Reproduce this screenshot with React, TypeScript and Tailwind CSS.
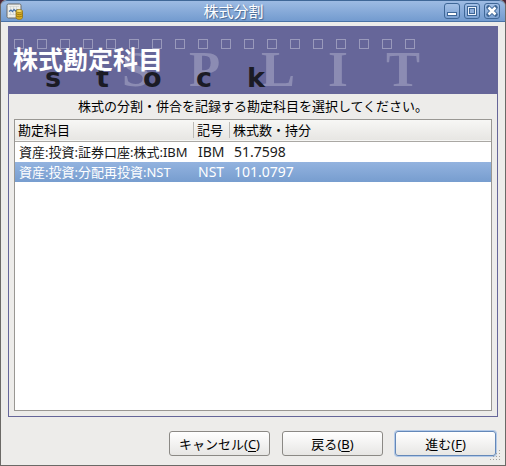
import { useState } from "react";
import type { ReactNode } from "react";

type Account = {
  name: string;
  symbol: string;
  shares: string;
};

const ACCOUNTS: Account[] = [
  { name: "資産:投資:証券口座:株式:IBM", symbol: "IBM", shares: "51.7598" },
  { name: "資産:投資:分配再投資:NST", symbol: "NST", shares: "101.0797" },
];

const SPLIT_LETTERS = [
  { char: "S", x: 113 },
  { char: "P", x: 180 },
  { char: "L", x: 252 },
  { char: "I", x: 319 },
  { char: "T", x: 377 },
];

const STOCK_LETTERS = [
  { char: "s", x: 36 },
  { char: "t", x: 87 },
  { char: "o", x: 134 },
  { char: "c", x: 187 },
  { char: "k", x: 238 },
];

function AppIcon() {
  return (
    <svg width="17" height="17" viewBox="0 0 17 17" aria-hidden="true">
      <rect x="1" y="1" width="14" height="14" rx="1.5" fill="#eeeeea" stroke="#6a6b69" />
      <path d="M3 3.5h10M3 11.5h7M4.5 3v9M7.5 3v9M10.5 3v6" stroke="#d0d2ce" strokeWidth="0.7" />
      <path d="M3 8.5l2-1.5 1.5 1.5L8 6.5 9.5 8l2-1.5" fill="none" stroke="#4770a8" strokeWidth="1.2" />
      <path d="M10 8v6.5c0 2.5 6.5 2.5 6.5 0V8z" fill="#d9ae22" stroke="#8d6b0c" strokeWidth="0.7" />
      <path d="M10 10.5c1 1.5 5.5 1.5 6.5 0M10 12.7c1 1.5 5.5 1.5 6.5 0" fill="none" stroke="#8d6b0c" strokeWidth="0.8" />
      <ellipse cx="13.2" cy="8" rx="3.2" ry="1.5" fill="#f7dd6a" stroke="#8d6b0c" strokeWidth="0.7" />
    </svg>
  );
}

function WindowButton({ label, children }: { label: string; children: ReactNode }) {
  return (
    <button
      type="button"
      aria-label={label}
      className="flex size-4 items-center justify-center rounded-[3px] border border-[#3f6797] bg-linear-to-b from-[#a3c0e6] to-[#7da2d3]"
    >
      <svg width="14" height="14" viewBox="0 0 14 14" className="shrink-0" aria-hidden="true">
        {children}
      </svg>
    </button>
  );
}

function TitleBar() {
  return (
    <header className="flex h-[22px] items-center rounded-t-md border-t border-b border-t-[#3f6797] border-b-[#4a72a6] bg-linear-to-b from-[#9dbbe3] to-[#739bcf] px-[5px]">
      <AppIcon />
      <h1 className="flex-1 text-center text-[15px] leading-5 text-white [text-shadow:1px_1px_1px_#44658f]">
        株式分割
      </h1>
      <div className="flex gap-1">
        <WindowButton label="最小化">
          <rect x="2.5" y="8.5" width="9" height="3" fill="#fff" stroke="#3f6797" />
        </WindowButton>
        <WindowButton label="最大化">
          <rect x="2.5" y="2.5" width="9" height="9" fill="#eef4fc" stroke="#3f6797" />
          <rect x="4.5" y="4.5" width="5" height="5" fill="#8eaedb" stroke="#3f6797" />
        </WindowButton>
        <WindowButton label="閉じる">
          <path d="M3.5 3.5l7 7M10.5 3.5l-7 7" stroke="#3f6797" strokeWidth="4.5" strokeLinecap="round" />
          <path d="M3.5 3.5l7 7M10.5 3.5l-7 7" stroke="#fff" strokeWidth="2.5" />
        </WindowButton>
      </div>
    </header>
  );
}

function Banner() {
  return (
    <div className="relative h-[67px] bg-[#666699]">
      <svg width="420" height="67" viewBox="0 0 420 67" className="block overflow-visible" aria-hidden="true">
        {Array.from({ length: 18 }, (_, i) => (
          <rect key={i} x={5.5 + i * 23} y="12.5" width="9" height="9" fill="none" stroke="#9999bb" />
        ))}
        <g fill="#8c8cb3" fontFamily="Liberation Serif, serif" fontSize="51" fontWeight="bold">
          {SPLIT_LETTERS.map(({ char, x }) => (
            <text key={char} x={x} y="59">{char}</text>
          ))}
        </g>
        <g fill="#1b1b25" fontFamily="DejaVu Sans, sans-serif" fontSize="27" fontWeight="bold">
          {STOCK_LETTERS.map(({ char, x }) => (
            <text key={char} x={x} y="60">{char}</text>
          ))}
        </g>
      </svg>
      <h2 className="absolute top-4 left-1 text-[25px] leading-8 font-bold text-white">株式勘定科目</h2>
    </div>
  );
}

function AccountTable() {
  const [selected, setSelected] = useState("NST");

  return (
    <div className="mx-[5px] mb-[5px] flex-1 border border-[#999793] bg-white">
      <table className="w-full table-fixed border-collapse text-left">
        <colgroup>
          <col className="w-[178px]" />
          <col className="w-9" />
          <col />
        </colgroup>
        <thead>
          <tr className="h-[21px] border-b border-[#aaa8a4] bg-linear-to-b from-[#f7f7f5] to-[#e7e6e3]">
            <th scope="col" className="p-0 pl-[3px] font-normal">勘定科目</th>
            <th scope="col" className="p-0 font-normal">
              <div className="h-4 border-l border-[#bcbab6] pl-[3px] leading-4">記号</div>
            </th>
            <th scope="col" className="p-0 font-normal">
              <div className="h-4 border-l border-[#bcbab6] pl-[3px] leading-4">株式数・持分</div>
            </th>
          </tr>
        </thead>
        <tbody>
          {ACCOUNTS.map((account) => (
            <tr
              key={account.symbol}
              aria-selected={account.symbol === selected}
              onClick={() => setSelected(account.symbol)}
              className={
                account.symbol === selected
                  ? "h-5 cursor-default bg-linear-to-b from-[#93b3df] to-[#779dcf] text-white"
                  : "h-5 cursor-default text-[#1a1a1a]"
              }
            >
              <td className="p-0 pl-1 whitespace-nowrap">{account.name}</td>
              <td className="p-0 pl-[5px] text-sm leading-5">{account.symbol}</td>
              <td className="p-0 pl-[5px] text-sm leading-5">{account.shares}</td>
            </tr>
          ))}
        </tbody>
      </table>
    </div>
  );
}

function DialogButton({ label, accel, focused = false }: { label: string; accel: string; focused?: boolean }) {
  return (
    <button
      type="button"
      className={
        focused
          ? "h-[25px] w-[101px] rounded-[3px] border border-[#6488b8] bg-linear-to-b from-white to-[#e7e6e4] leading-5 shadow-[0_0_0_1px_#b4cae8]"
          : "h-[25px] w-[101px] rounded-[3px] border border-[#8b8985] bg-linear-to-b from-white to-[#e7e6e4] leading-5"
      }
    >
      {label}(<span className="underline underline-offset-2">{accel}</span>)
    </button>
  );
}

function ResizeGrip() {
  return (
    <svg width="12" height="12" viewBox="0 0 12 12" className="absolute right-[3px] bottom-[3px]" aria-hidden="true">
      <path
        d="M9 0h1v1h-1zM6 3h1v1h-1zM9 3h1v1h-1zM3 6h1v1h-1zM6 6h1v1h-1zM9 6h1v1h-1zM0 9h1v1h-1zM3 9h1v1h-1zM6 9h1v1h-1zM9 9h1v1h-1z"
        fill="#a5a39f"
      />
    </svg>
  );
}

export default function App() {
  return (
    <div className="min-h-screen bg-[#4d2538] font-['Noto_Sans','Noto_Sans_CJK_JP',sans-serif] text-[13px] leading-5 text-black">
      <div className="relative flex min-h-screen flex-col overflow-hidden rounded-t-md border border-t-0 border-[#6b6966] bg-[#edecea]">
        <TitleBar />
        <main className="mx-[7px] mt-1 flex flex-1 flex-col border border-[#666699]">
          <Banner />
          <p className="py-[2px] text-center leading-[21px]">
            株式の分割・併合を記録する勘定科目を選択してください。
          </p>
          <AccountTable />
        </main>
        <footer className="flex justify-end gap-3 px-[9px] pt-[14px] pb-[9px]">
          <DialogButton label="キャンセル" accel="C" />
          <DialogButton label="戻る" accel="B" />
          <DialogButton label="進む" accel="F" focused />
        </footer>
        <ResizeGrip />
      </div>
    </div>
  );
}
